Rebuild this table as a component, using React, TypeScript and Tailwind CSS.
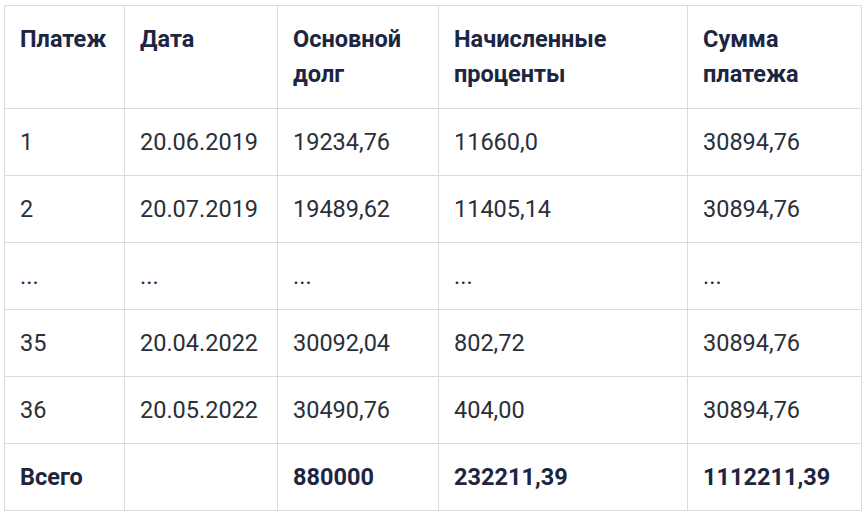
const header = ["Платеж", "Дата", "Основной долг", "Начисленные проценты", "Сумма платежа"];

const rows: string[][] = [
  ["1", "20.06.2019", "19234,76", "11660,0", "30894,76"],
  ["2", "20.07.2019", "19489,62", "11405,14", "30894,76"],
  ["...", "...", "...", "...", "..."],
  ["35", "20.04.2022", "30092,04", "802,72", "30894,76"],
  ["36", "20.05.2022", "30490,76", "404,00", "30894,76"],
];

const total = ["Всего", "", "880000", "232211,39", "1112211,39"];

const widths = ["w-[120px]", "w-[153px]", "w-[161px]", "w-[249px]", "w-[174px]"];

export default function App() {
  return (
    <div className="min-h-screen bg-white pl-[4px] pt-[5px] font-['Roboto',sans-serif]">
      <table className="w-[857px] table-fixed border-collapse text-[23.5px] leading-[35px]">
        <colgroup>
          {widths.map((w, i) => (
            <col key={i} className={w} />
          ))}
        </colgroup>
        <thead>
          <tr>
            {header.map((h, i) => (
              <th
                key={i}
                className="border border-[#dadada] px-[15px] pt-[16px] pb-[16px] text-left align-top font-bold text-[#1c2641]"
              >
                {h}
              </th>
            ))}
          </tr>
        </thead>
        <tbody>
          {rows.map((r, i) => (
            <tr key={i}>
              {r.map((c, j) => (
                <td key={j} className="border border-[#dadada] px-[15px] pt-[16px] pb-[15px] text-[#2b2f38]">
                  {c}
                </td>
              ))}
            </tr>
          ))}
          <tr>
            {total.map((c, j) => (
              <td key={j} className="border border-[#dadada] px-[15px] pt-[16px] pb-[15px] font-bold text-[#1c2641]">
                {c}
              </td>
            ))}
          </tr>
        </tbody>
      </table>
    </div>
  );
}
